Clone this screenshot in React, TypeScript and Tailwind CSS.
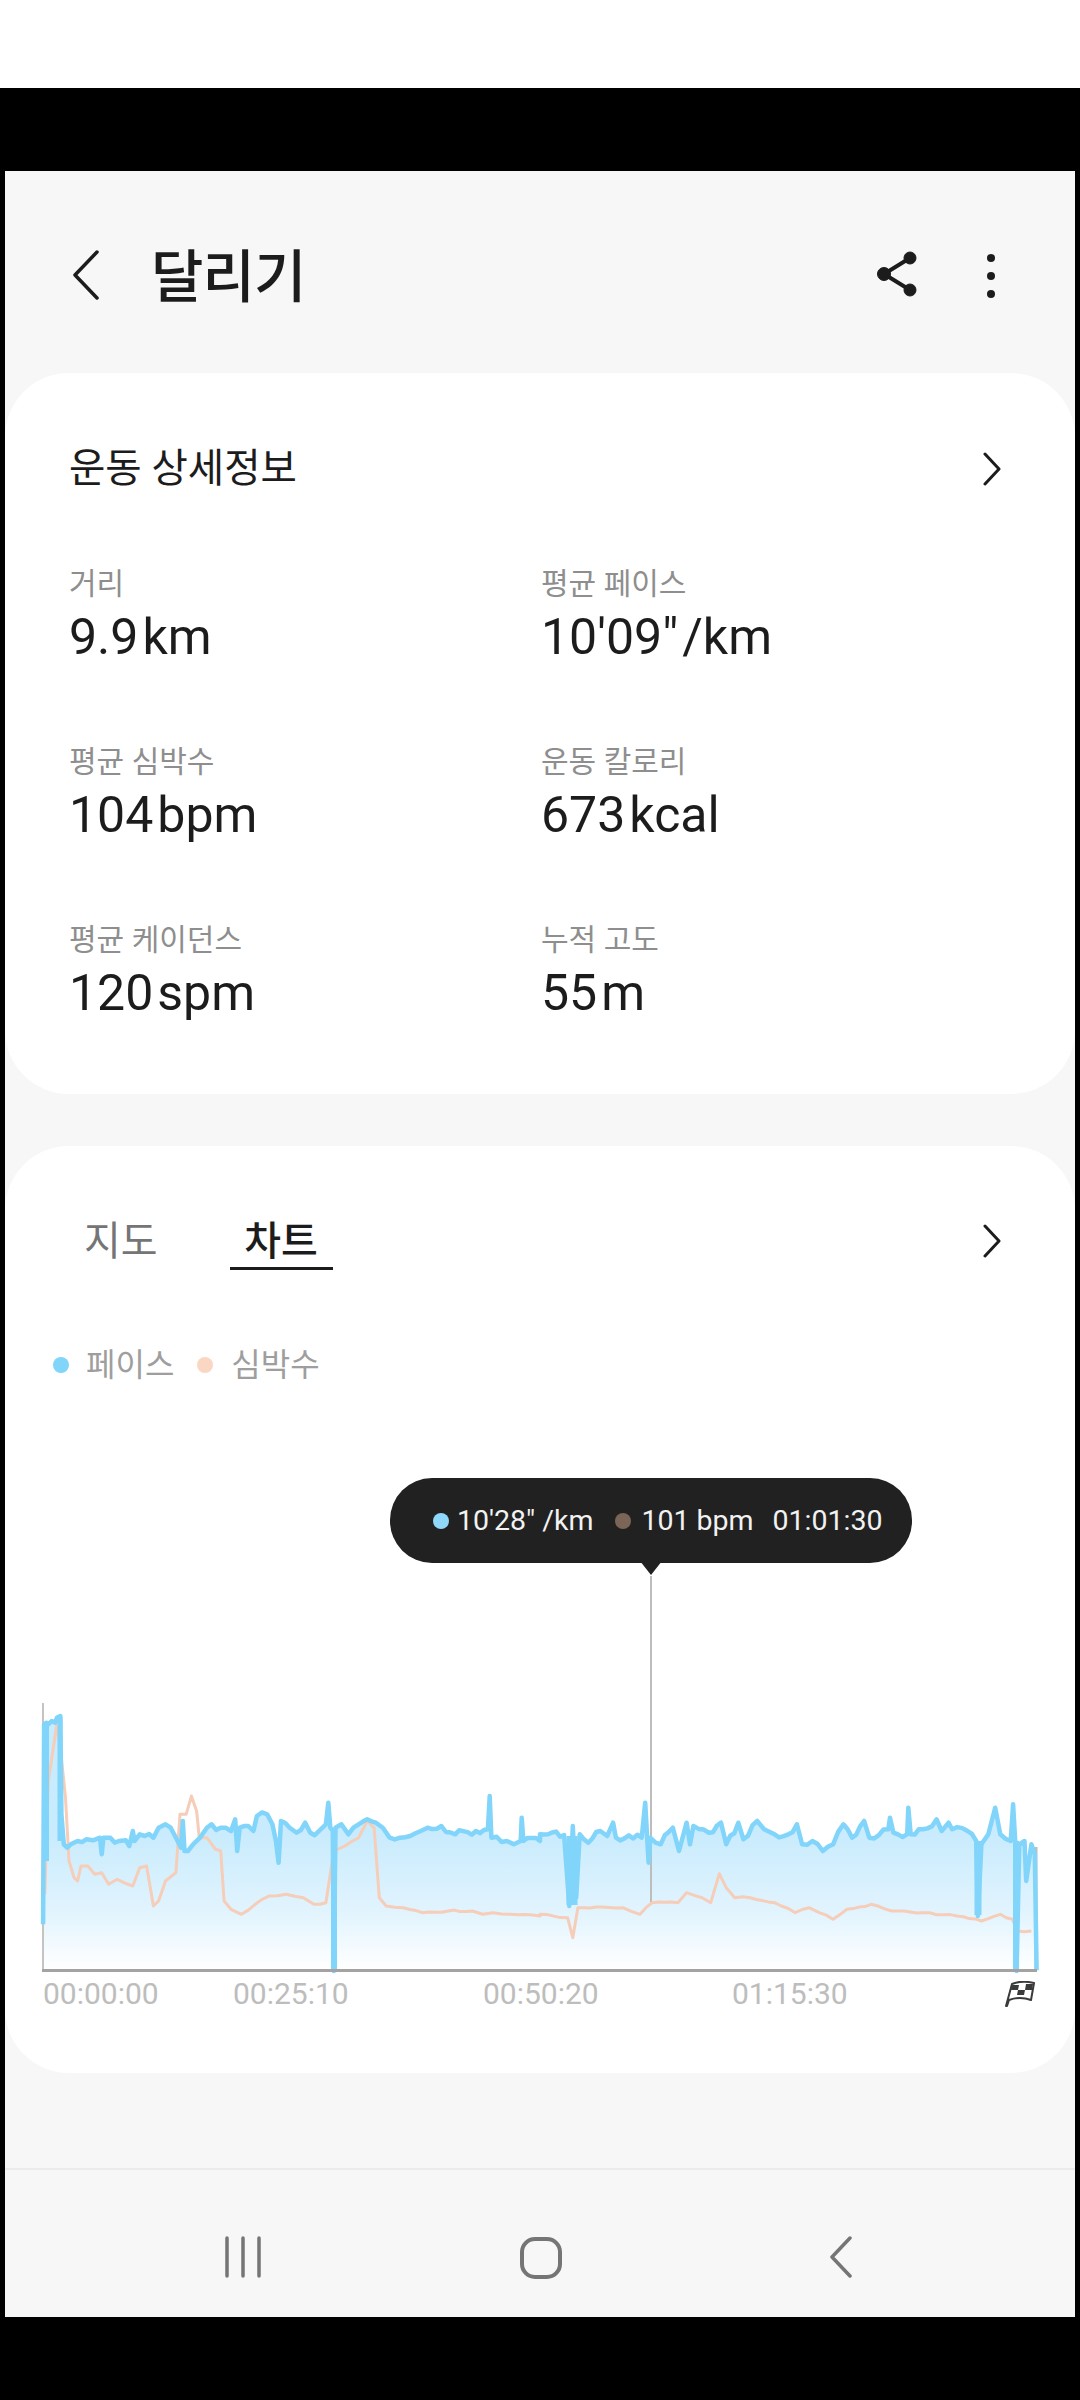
import React from 'react';

type Pt = [number, number];

// chart traces, read off the reference: [x, y] per 1/2.9 px horizontally and 1/3 px vertically
const blueLeft: Pt[] = [[125,730],[128,130],[135,125],[140,130],[150,120],[160,125],[165,110],[175,105],[178,400],[185,490],[195,500],[205,490],[225,480],[250,475],[270,478],[290,470],[295,520],[300,470],[320,470],[345,480],[365,478],[375,495],[385,450],[390,480],[405,460],[420,465],[445,470],[460,440],[480,430],[495,440],[510,470],[525,500],[530,420],[535,510],[545,510],[560,490],[580,470],[600,440],[640,440],[670,450],[682,415],[688,510],[695,440],[720,435],[735,450],[745,405],[775,400],[790,430],[800,480],[808,545],[815,420],[840,440],[860,455],[885,425],[900,455],[925,450],[945,430],[952,365],[958,440],[965,450],[968,870],[973,440],[990,430],[1010,460],[1040,430],[1065,415],[1090,425],[1110,440],[1130,470],[1160,470],[1190,465],[1220,450],[1240,440],[1280,435],[1320,460],[1380,450],[1415,445],[1420,345],[1425,470],[1470,480],[1490,490],[1510,480],[1513,410],[1518,480],[1566,480]];
const blueRight: Pt[] = [[0,460],[70,462],[85,675],[95,435],[105,650],[115,460],[140,485],[175,450],[195,465],[212,425],[220,470],[295,470],[305,365],[315,545],[320,470],[350,490],[385,440],[403,510],[425,425],[435,490],[445,435],[490,455],[525,425],[540,490],[575,425],[590,475],[630,420],[650,445],[680,460],[720,460],[745,430],[760,490],[790,480],[820,510],[850,490],[880,430],[905,470],[940,420],[955,470],[1010,445],[1015,410],[1025,455],[1065,460],[1068,380],[1075,460],[1110,445],[1150,415],[1165,450],[1185,425],[1195,445],[1240,450],[1265,480],[1270,705],[1280,490],[1300,460],[1320,380],[1335,460],[1365,480],[1372,370],[1378,480],[1382,870],[1390,490],[1405,480],[1410,600],[1425,490],[1435,520],[1440,868]];
const peachLeft: Pt[] = [[130,640],[140,300],[165,130],[175,200],[190,350],[200,540],[215,590],[225,600],[235,555],[255,555],[275,580],[295,575],[315,610],[340,595],[385,615],[405,560],[425,555],[445,675],[460,660],[480,600],[510,575],[522,400],[540,400],[555,345],[570,390],[578,470],[600,470],[625,505],[640,510],[650,660],[670,685],[700,700],[740,670],[780,645],[830,640],[880,650],[910,670],[945,665],[968,510],[1000,495],[1040,470],[1065,420],[1085,440],[1100,650],[1120,675],[1170,680],[1225,695],[1300,690],[1370,690],[1400,700],[1430,695],[1480,700],[1566,705]];
const peachRight: Pt[] = [[0,700],[80,710],[95,770],[110,680],[180,678],[240,680],[290,700],[325,665],[400,665],[425,635],[470,650],[495,665],[520,578],[540,620],[565,650],[610,650],[680,665],[740,695],[780,680],[810,695],[850,715],[890,685],[960,670],[1020,690],[1110,695],[1210,705],[1280,720],[1335,700],[1370,715],[1385,750],[1425,750]];

const toPage = (pts: Pt[], originX: number): Pt[] =>
  pts.map(([x, y]) => [originX + x / 2.9, 1680 + y / 3]);

// fills long flat stretches with a small fixed wobble so the trace reads as sampled data
const roughen = (pts: Pt[], step: number, amount: number): Pt[] => {
  const out: Pt[] = [];
  pts.forEach((p, i) => {
    out.push(p);
    const next = pts[i + 1];
    if (!next) return;
    const n = Math.floor((next[0] - p[0]) / step);
    for (let k = 1; k < n; k++) {
      const t = k / n;
      const x = p[0] + (next[0] - p[0]) * t;
      const wobble = Math.sin(x * 12.9898) * 43758.5453;
      out.push([x, p[1] + (next[1] - p[1]) * t + (wobble - Math.floor(wobble) - 0.5) * amount]);
    }
  });
  return out;
};

const join = (pts: Pt[]) => pts.map(([x, y]) => `${x.toFixed(1)},${y.toFixed(1)}`).join(' ');

const blue = roughen([...toPage(blueLeft, 0), ...toPage(blueRight, 540)], 4, 7);
const peach = roughen([...toPage(peachLeft, 0), ...toPage(peachRight, 540)], 6, 2);

const stats = [
  { label: '거리', value: '9.9', unit: 'km' },
  { label: '평균 페이스', value: `10'09"`, unit: '/km' },
  { label: '평균 심박수', value: '104', unit: 'bpm' },
  { label: '운동 칼로리', value: '673', unit: 'kcal' },
  { label: '평균 케이던스', value: '120', unit: 'spm' },
  { label: '누적 고도', value: '55', unit: 'm' },
];

const Chevron = () => (
  <svg width="20" height="34" viewBox="0 0 20 34" fill="none" stroke="#1c1c1c" strokeWidth="3" strokeLinecap="round" strokeLinejoin="round">
    <path d="M3 2 L17 17 L3 32" />
  </svg>
);

export default function App() {
  return (
    <div className="w-[1080px] h-[2400px] bg-black flex flex-col font-[Roboto,'Noto_Sans_CJK_KR',sans-serif]">
      <div className="h-[88px] bg-white shrink-0" />
      <div className="h-[83px] shrink-0" />

      <div className="mx-[5px] h-[2146px] bg-[#f7f7f7] flex flex-col overflow-hidden">
        {/* Header */}
        <div className="h-[202px] shrink-0 flex items-start pt-[76px]">
          <svg className="ml-[66px] mt-[2px]" width="30" height="52" viewBox="0 0 30 52" fill="none" stroke="#1c1c1c" strokeWidth="3.5" strokeLinecap="round" strokeLinejoin="round">
            <path d="M26 3 L4 26 L26 49" />
          </svg>
          <h1 className="ml-[50px] mt-[1px] text-[57px] leading-[60px] text-[#1c1c1c] font-medium tracking-[-1px]">달리기</h1>
          <svg className="ml-auto mt-[4px]" width="44" height="46" viewBox="0 0 44 46" fill="#1c1c1c" stroke="#1c1c1c">
            <path d="M35 7 L9 23 L35 39" fill="none" strokeWidth="4" />
            <circle cx="35" cy="7" r="6" />
            <circle cx="9" cy="23" r="6.5" />
            <circle cx="35" cy="39" r="6" />
          </svg>
          <div className="ml-[68px] mr-[80px] mt-[7px] flex flex-col gap-[10px]">
            <span className="w-[8px] h-[8px] rounded-full bg-[#1c1c1c]" />
            <span className="w-[8px] h-[8px] rounded-full bg-[#1c1c1c]" />
            <span className="w-[8px] h-[8px] rounded-full bg-[#1c1c1c]" />
          </div>
        </div>

        {/* Workout details */}
        <section className="h-[721px] shrink-0 bg-white rounded-[64px] pt-[76px] pl-[64px]">
          <div className="flex items-center justify-between pr-[73px] h-[40px]">
            <h2 className="text-[39.5px] leading-[40px] text-[#1c1c1c]">운동 상세정보</h2>
            <Chevron />
          </div>
          <div className="mt-[77px] grid grid-cols-[472px_1fr] gap-y-[77px]">
            {stats.map((s) => (
              <div key={s.label}>
                <div className="text-[30px] leading-[36px] text-[#8e8e8e]">{s.label}</div>
                <div className="mt-[5px] text-[50px] leading-[60px] text-[#1c1c1c]">
                  {s.value}
                  <span className="ml-[4px]">{s.unit}</span>
                </div>
              </div>
            ))}
          </div>
        </section>

        {/* Map / chart */}
        <section className="mt-[52px] h-[927px] shrink-0 bg-white rounded-[64px] pt-[74px]">
          <div className="flex items-start pr-[73px]">
            <div className="ml-[79px] text-[40px] leading-[44px] text-[#757575]">지도</div>
            <div className="ml-[72px] w-[103px] border-b-[3px] border-[#1c1c1c] h-[50px] text-center text-[40px] leading-[44px] text-[#1c1c1c] font-medium">차트</div>
            <div className="ml-auto mt-[4px]"><Chevron /></div>
          </div>

          <div className="mt-[77px] ml-[48px] flex items-center h-[36px] text-[32px] leading-[36px] text-[#9e9e9e]">
            <span className="w-[16px] h-[16px] rounded-full bg-[#81d4fa]" />
            <span className="ml-[17px]">페이스</span>
            <span className="ml-[23px] w-[16px] h-[16px] rounded-full bg-[#fad7c3]" />
            <span className="ml-[18px]">심박수</span>
          </div>

          <div className="relative mt-[66px] h-[527px]">
            <svg className="block" width="1070" height="527" viewBox="5 1448 1070 527" fill="none">
              <defs>
                <linearGradient id="paceFill" x1="0" y1="1830" x2="0" y2="1968" gradientUnits="userSpaceOnUse">
                  <stop offset="0" stopColor="#c8ebfd" />
                  <stop offset="0.6" stopColor="#e2f4fe" />
                  <stop offset="1" stopColor="#ffffff" />
                </linearGradient>
              </defs>
              <polygon points={`43,1968 ${join(blue)} 1036,1968`} fill="url(#paceFill)" />
              <line x1="651" y1="1575" x2="651" y2="1904" stroke="#bdbdbd" strokeWidth="2" />
              <line x1="43" y1="1702" x2="43" y2="1968" stroke="#c4c4c4" strokeWidth="2" />
              <line x1="1036" y1="1846" x2="1036" y2="1968" stroke="#bdbdbd" strokeWidth="3" />
              <polyline points={join(peach)} stroke="#f5cdb8" strokeWidth="3" strokeLinejoin="round" />
              <polyline points={join(blue)} stroke="#81d4fa" strokeWidth="4.5" strokeLinejoin="round" />
              {/* the wide dips and the solid opening stretch */}
              <path d="M46 1722 V1860" stroke="#81d4fa" strokeWidth="6" />
              <path d="M60 1716 V1840" stroke="#81d4fa" strokeWidth="5" />
              <path d="M572 1835 V1904" stroke="#81d4fa" strokeWidth="11" />
              <path d="M334 1840 V1968" stroke="#81d4fa" strokeWidth="6" />
              <path d="M978 1840 V1914" stroke="#81d4fa" strokeWidth="7" />
              <path d="M1016 1840 V1968" stroke="#81d4fa" strokeWidth="6" />
              <line x1="42" y1="1969.5" x2="1037" y2="1969.5" stroke="#a3a3a3" strokeWidth="3" />
            </svg>

            {/* Tooltip */}
            <div className="absolute left-[385px] top-[29px] w-[522px] h-[85px] rounded-[42px] bg-[#212121] text-[28.5px] leading-[84px] text-[#f2f2f2] flex items-center whitespace-nowrap">
              <span className="ml-[43px] w-[16px] h-[16px] rounded-full bg-[#90d8fb]" />
              <span className="ml-[8px]">10'28" /km</span>
              <span className="ml-[22px] w-[16px] h-[16px] rounded-full bg-[#7b6557]" />
              <span className="ml-[10px]">101 bpm</span>
              <span className="ml-[19px]">01:01:30</span>
              <span className="absolute left-[250px] top-[83px] w-0 h-0 border-x-[11px] border-x-transparent border-t-[14px] border-t-[#212121]" />
            </div>
          </div>

          <div className="flex items-center h-[36px] text-[30px] leading-[36px] text-[#bdbdbd] whitespace-nowrap">
            <span className="ml-[38px] w-[115px]">00:00:00</span>
            <span className="ml-[75px] w-[115px]">00:25:10</span>
            <span className="ml-[135px] w-[117px]">00:50:20</span>
            <span className="ml-[132px] w-[115px]">01:15:30</span>
            <svg className="ml-[158px]" width="30" height="26" viewBox="0 0 30 26">
              <path d="M1 25 L7 3 Q17 -1 29 2 L26 19 Q15 15 4 19 L2 25 Z" fill="#ffffff" stroke="#3a3a3a" strokeWidth="2" strokeLinejoin="round" />
              <path d="M7 4 h7 l-1 5 h-7 Z M21 3 h7 l-1 6 h-7 Z M13 9 h7 l-1 5 h-7 Z" fill="#3a3a3a" />
            </svg>
          </div>
        </section>

        {/* Navigation bar */}
        <nav className="mt-[95px] flex-1 border-t-2 border-[#ebebeb] relative flex items-start pt-[66px]">
          <svg className="ml-[220px]" width="36" height="42" viewBox="0 0 36 42" fill="none" stroke="#757575" strokeWidth="3.5" strokeLinecap="round">
            <path d="M2 2 V40 M18 2 V40 M34 2 V40" />
          </svg>
          <svg className="ml-[258px]" width="44" height="44" viewBox="0 0 44 44" fill="none" stroke="#757575" strokeWidth="4">
            <rect x="3" y="3" width="38" height="38" rx="13" />
          </svg>
          <svg className="ml-[266px]" width="24" height="42" viewBox="0 0 24 42" fill="none" stroke="#757575" strokeWidth="3.5" strokeLinecap="round" strokeLinejoin="round">
            <path d="M21 2 L3 21 L21 40" />
          </svg>
        </nav>
      </div>
    </div>
  );
}
